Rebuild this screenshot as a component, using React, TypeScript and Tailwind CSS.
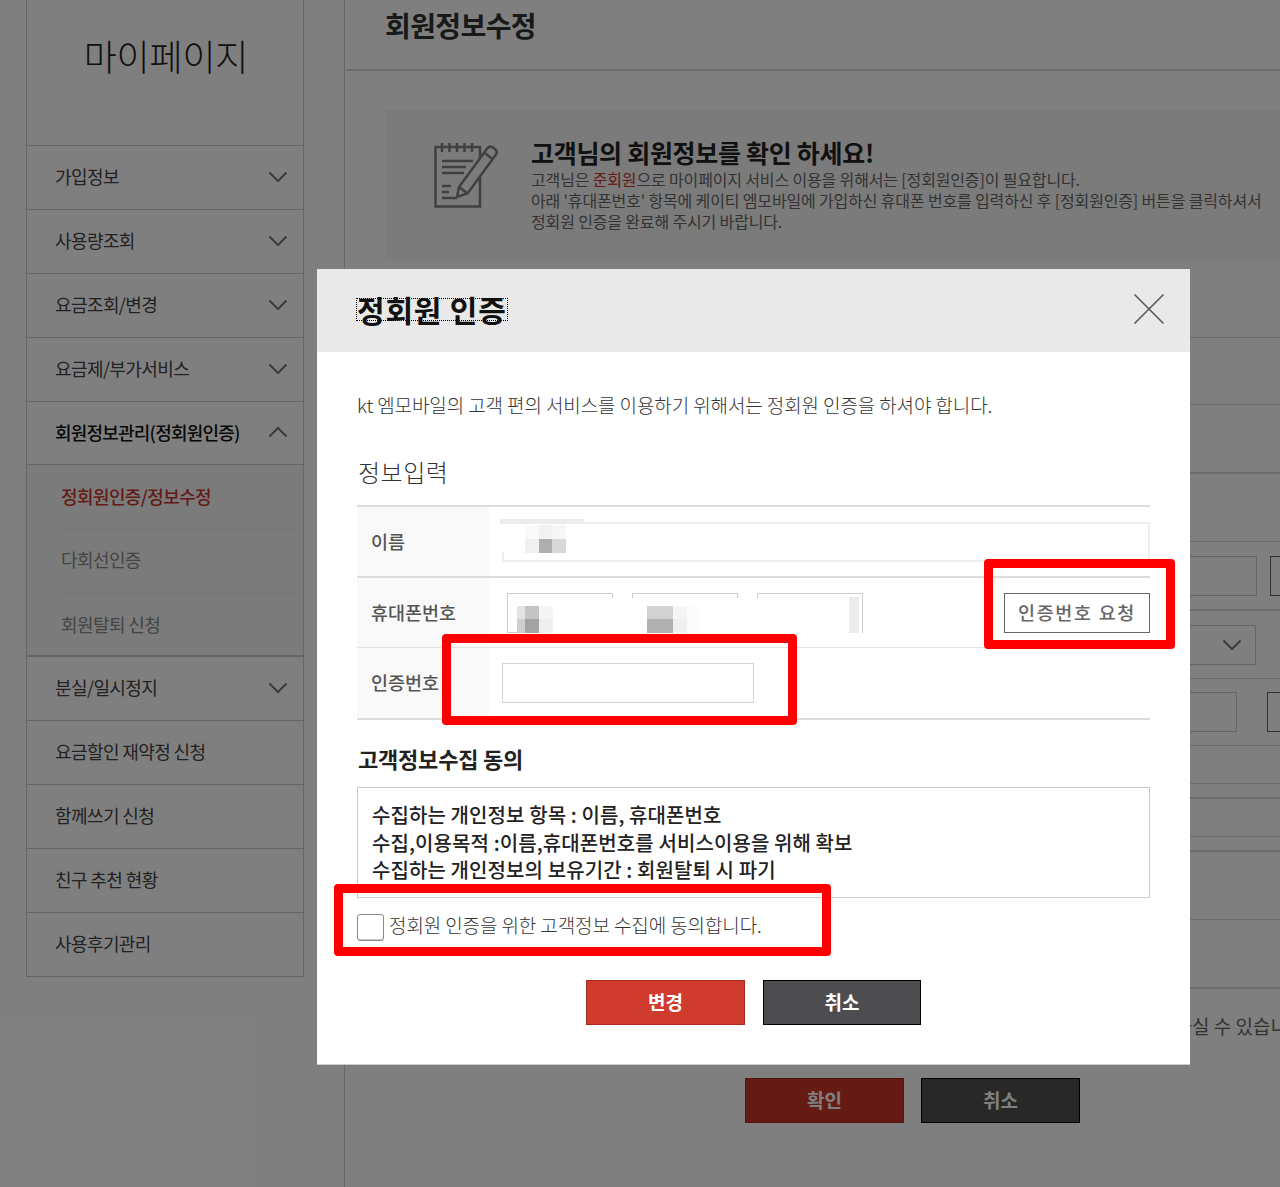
import React from "react";

function Chevron({ up = false, className = "" }: { up?: boolean; className?: string }) {
  return (
    <svg width="20" height="12" viewBox="0 0 20 12" fill="none" className={className}>
      <polyline
        points={up ? "1.5,10.5 10,2 18.5,10.5" : "1.5,1.5 10,10 18.5,1.5"}
        stroke="#777"
        strokeWidth="2"
      />
    </svg>
  );
}

function NoteIcon() {
  return (
    <svg width="66" height="68" viewBox="14 12 66 68" fill="none" stroke="#808080" strokeWidth="2.5">
      <rect x="15.500" y="18" width="44.500" height="59.500" />
      <path d="M22 14v9M29.500 14v9M37 14v9M44.500 14v9M52 14v9" />
      <path d="M22 32h31M22 38h24M22 44h22M22 57h9M22 63h7M22 69h15" />
      <path
        d="M37 68 39 58 67.500 19 Q70 16.500 73 18.500 L75.500 20.500 Q78 23 76 25.500 L47.500 64.500 Z"
        fill="#f6f6f6"
      />
      <path d="M39 58 47.500 64.500M64 23.500 72.500 30" />
    </svg>
  );
}

function SideItem({ label, arrow = true }: { label: string; arrow?: boolean }) {
  return (
    <div className="flex h-16 items-center justify-between border-b border-[#ccc] pb-[2px] pl-[28px] pr-[15px] text-[18px] tracking-[-0.6px] text-[#444]">
      <span>{label}</span>
      {arrow && <Chevron />}
    </div>
  );
}

function Row({ h, thick = false, children }: { h: string; thick?: boolean; children?: React.ReactNode }) {
  return (
    <div className={`flex items-center justify-end ${h} ${thick ? "border-b-2" : "border-b"} border-[#d8d8d8]`}>
      {children}
    </div>
  );
}

function Mosaic({ x, y, w, h, c }: { x: number; y: number; w: number; h: number; c: string }) {
  return <div className="absolute" style={{ left: x, top: y, width: w, height: h, background: c }} />;
}

const mosaics: [number, number, number, number, string][] = [
  [183, 250, 84, 5, "#ececec"],
  [185, 255, 60, 28, "#ffffff"],
  [208, 256, 14, 14, "#fafafa"],
  [222, 256, 13, 14, "#f2f2f2"],
  [235, 256, 14, 14, "#f7f7f7"],
  [208, 270, 14, 14, "#f0f0f0"],
  [222, 270, 13, 14, "#aeaeae"],
  [235, 270, 14, 14, "#d8d8d8"],
  [201, 329, 100, 37, "#ffffff"],
  [200, 337, 8, 13, "#e3e3e3"],
  [208, 337, 14, 13, "#c4c4c4"],
  [222, 337, 14, 13, "#f5f5f5"],
  [200, 350, 8, 14, "#cfcfcf"],
  [208, 350, 14, 14, "#a3a3a3"],
  [222, 350, 14, 14, "#eeeeee"],
  [314, 329, 107, 37, "#ffffff"],
  [330, 337, 26, 13, "#d2d2d2"],
  [356, 337, 14, 13, "#f5f5f5"],
  [370, 337, 13, 13, "#fcfcfc"],
  [330, 350, 26, 14, "#b0b0b0"],
  [356, 350, 14, 14, "#f0f0f0"],
  [370, 350, 13, 14, "#fbfbfb"],
  [439, 329, 106, 37, "#ffffff"],
  [532, 328, 10, 36, "#ececec"],
];

export default function App() {
  return (
    <div className="relative h-[1187px] w-[1280px] overflow-hidden bg-white font-['Noto_Sans_CJK_KR',sans-serif]">
      {/* page */}
      <div className="flex h-full">
        <aside className="w-[344px] shrink-0 pl-[26px] pr-[40px]">
          <div className="border-x border-b border-[#ccc]">
            <div className="flex h-[146px] justify-center border-b border-[#ccc] pl-[2px] pt-[29px] text-[36px] font-light leading-[52px] tracking-[-0.2px] text-[#222]">
              마이페이지
            </div>
            <SideItem label="가입정보" />
            <SideItem label="사용량조회" />
            <SideItem label="요금조회/변경" />
            <SideItem label="요금제/부가서비스" />
            <div className="flex h-[63px] items-center justify-between border-b border-[#ccc] pb-[2px] pl-[28px] pr-[15px] text-[18px] font-medium tracking-[-0.8px] text-[#111]">
              <span>회원정보관리(정회원인증)</span>
              <Chevron up />
            </div>
            <div className="border-b-2 border-[#ccc] bg-[#f7f7f7] pl-[34px] text-[18px] tracking-[-0.6px]">
              <div className="flex h-16 items-center border-b border-[#eee] font-medium text-[#c8352a]">정회원인증/정보수정</div>
              <div className="flex h-16 items-center border-b border-[#eee] pb-[2px] text-[#888]">다회선인증</div>
              <div className="flex h-[62px] items-center text-[#888]">회원탈퇴 신청</div>
            </div>
            <SideItem label="분실/일시정지" />
            <SideItem label="요금할인 재약정 신청" arrow={false} />
            <SideItem label="함께쓰기 신청" arrow={false} />
            <SideItem label="친구 추천 현황" arrow={false} />
            <div className="flex h-[63px] items-center pb-[2px] pl-[28px] text-[18px] tracking-[-0.6px] text-[#444]">사용후기관리</div>
          </div>
        </aside>

        <main className="min-w-0 flex-1 overflow-hidden border-l border-[#ccc]">
          <div className="ml-[1px] h-[71px] border-b-2 border-[#d8d8d8] pl-[39px] pt-[3px] text-[28px] font-bold leading-[44px] tracking-[-0.6px] text-[#333]">
            회원정보수정
          </div>
          <div className="ml-[40px] mt-[39px] flex h-[150px] w-[1000px] bg-[#f6f6f6] pl-[49px] pt-[31px]">
            <NoteIcon />
            <div className="ml-[31px] -mt-[5px] whitespace-nowrap">
              <div className="text-[25px] font-bold leading-[33px] tracking-[-0.3px] text-[#222]">고객님의 회원정보를 확인 하세요!</div>
              <div className="text-[16px] leading-[21px] tracking-[-0.15px] text-[#666]">
                <div>
                  고객님은 <span className="text-[#c8352a]">준회원</span>으로 마이페이지 서비스 이용을 위해서는 [정회원인증]이 필요합니다.
                </div>
                <div>아래 '휴대폰번호' 항목에 케이티 엠모바일에 가입하신 휴대폰 번호를 입력하신 후 [정회원인증] 버튼을 클릭하셔서</div>
                <div>정회원 인증을 완료해 주시기 바랍니다.</div>
              </div>
            </div>
          </div>

          <div className="mt-[77px]">
            <div className="border-b border-[#d8d8d8]" />
            <Row h="h-[67px]" />
            <Row h="h-[69px]" thick />
            <Row h="h-[68px]" />
            <Row h="h-[69px]" thick>
              <div className="h-10 w-[200px] border border-[#ccc]" />
              <div className="ml-[13px] mr-[-60px] h-10 w-[70px] border border-[#666]" />
            </Row>
            <Row h="h-[68px]">
              <div className="flex h-10 w-[200px] items-center justify-end border border-[#ccc] pr-[13px]">
                <Chevron />
              </div>
              <div className="w-[24px]" />
            </Row>
            <Row h="h-[67px]">
              <div className="h-10 w-[200px] border border-[#ccc]" />
              <div className="ml-[30px] mr-[-60px] h-10 w-[73px] border border-[#666]" />
            </Row>
            <div className="h-[38px] border-b border-[#d8d8d8]" />
            <div className="h-[15px] border-b-2 border-[#d8d8d8]" />
            <div className="h-[38px] border-b border-[#d8d8d8]" />
            <div className="h-[15px] border-b-2 border-[#d8d8d8]" />
            <Row h="h-[68px]" />
            <Row h="h-[69px]" thick />
          </div>

          <p className="mt-[25px] h-[24px] whitespace-nowrap pl-[703px] text-[19px] leading-[24px] text-[#666]">
            회원정보를 변경하실 수 있습니다.
          </p>
          <div className="ml-[400px] mt-[40px] flex gap-[17px] text-[19px] font-bold">
            <div className="flex h-[45px] w-[159px] items-center justify-center border border-[#a82a20] bg-[#ca3628] text-white">확인</div>
            <div className="flex h-[45px] w-[159px] items-center justify-center border border-black bg-[#505050] text-white">취소</div>
          </div>
        </main>
      </div>

      {/* dim */}
      <div className="absolute inset-0 bg-black/50" />

      {/* modal */}
      <div className="absolute left-[317px] top-[269px] flex h-[796px] w-[873px] flex-col border-b border-[#ccc] bg-white">
        <div className="flex h-[83px] shrink-0 items-center justify-between bg-[#e9e9e9] pb-[3px] pl-[39px] pr-[26px]">
          <span className="border border-dotted border-black text-[30px] font-bold leading-[21px] tracking-[0.8px] text-[#111]">
            정회원 인증
          </span>
          <svg width="30" height="30" viewBox="0 0 30 30" fill="none" stroke="#555" strokeWidth="1.5">
            <path d="M0.500 0.500 29.500 29.500M29.500 0.500 0.500 29.500" />
          </svg>
        </div>

        <div className="relative flex flex-1 flex-col px-[40px]">
          <p className="mt-[40px] text-[19px] font-light leading-[26px] tracking-[-0.1px] text-[#333]">
            kt 엠모바일의 고객 편의 서비스를 이용하기 위해서는 정회원 인증을 하셔야 합니다.
          </p>
          <h2 className="mt-[36px] pl-[1px] text-[24px] font-light leading-[36px] tracking-[0.5px] text-[#333]">정보입력</h2>

          <div className="mt-[15px] border-y-2 border-[#ddd] text-[18.500px] font-medium text-[#555]">
            <div className="flex h-[69px]">
              <div className="flex w-[132px] items-center bg-[#f9f9f9] pl-[14px]">이름</div>
              <div className="flex flex-1 items-center pl-[13px]">
                <div className="h-10 w-full border-2 border-[#eee]" />
              </div>
            </div>
            <div className="flex h-[71px] border-t-2 border-[#ddd]">
              <div className="flex w-[132px] items-center bg-[#f9f9f9] pl-[14px]">휴대폰번호</div>
              <div className="flex flex-1 items-center justify-between pl-[18px]">
                <div className="flex gap-[19px]">
                  <div className="h-10 w-[106px] border border-[#ccc]" />
                  <div className="h-10 w-[106px] border border-[#ccc]" />
                  <div className="h-10 w-[106px] border border-[#ccc]" />
                </div>
                <div className="flex h-10 w-[146px] items-center justify-center border border-[#666] tracking-[1.700px] text-[#666]">인증번호 요청</div>
              </div>
            </div>
            <div className="flex h-[71px] border-t border-[#e4e4e4]">
              <div className="flex w-[132px] items-center bg-[#f9f9f9] pl-[14px]">인증번호</div>
              <div className="flex flex-1 items-center pl-[13px]">
                <div className="h-10 w-[252px] border border-[#d4d4d4]" />
              </div>
            </div>
          </div>

          <h3 className="mt-[23px] pl-[1px] text-[22px] font-bold leading-[30px] tracking-[-0.2px] text-[#222]">고객정보수집 동의</h3>
          <div className="mt-[14px] h-[111px] border border-[#ccc] px-[14px] pt-[13px] text-[20px] font-medium leading-[27.500px] tracking-[0.1px] text-[#222]">
            <div>수집하는 개인정보 항목 : 이름, 휴대폰번호</div>
            <div>수집,이용목적 :이름,휴대폰번호를 서비스이용을 위해 확보</div>
            <div>수집하는 개인정보의 보유기간 : 회원탈퇴 시 파기</div>
          </div>
          <label className="mt-[16px] flex items-start gap-[5px]">
            <span className="h-[27px] w-[27px] rounded-[3px] border border-[#888] shadow-[inset_0_-1px_0_#ccc]" />
            <span className="-mt-[1px] text-[19px] font-light leading-[24px] tracking-[-0.1px] text-[#333]">
              정회원 인증을 위한 고객정보 수집에 동의합니다.
            </span>
          </label>
          <div className="mt-[39px] flex justify-center gap-[18px] text-[19px] font-bold text-white">
            <div className="flex h-[45px] w-[159px] items-center justify-center border border-[#a82a20] bg-[#cf3b2d]">변경</div>
            <div className="flex h-[45px] w-[158px] items-center justify-center border border-black bg-[#4d4d4f]">취소</div>
          </div>

          {mosaics.map(([x, y, w, h, c], i) => (
            <Mosaic key={i} x={x} y={y - 83} w={w} h={h} c={c} />
          ))}
        </div>
      </div>

      {/* annotation boxes */}
      <div className="absolute left-[984px] top-[559px] h-[90px] w-[191px] rounded-[4px] border-[9px] border-[#ff0000]" />
      <div className="absolute left-[442px] top-[634px] h-[91px] w-[355px] rounded-[4px] border-[9px] border-[#ff0000]" />
      <div className="absolute left-[334px] top-[884px] h-[72px] w-[497px] rounded-[4px] border-[9px] border-[#ff0000]" />
    </div>
  );
}
